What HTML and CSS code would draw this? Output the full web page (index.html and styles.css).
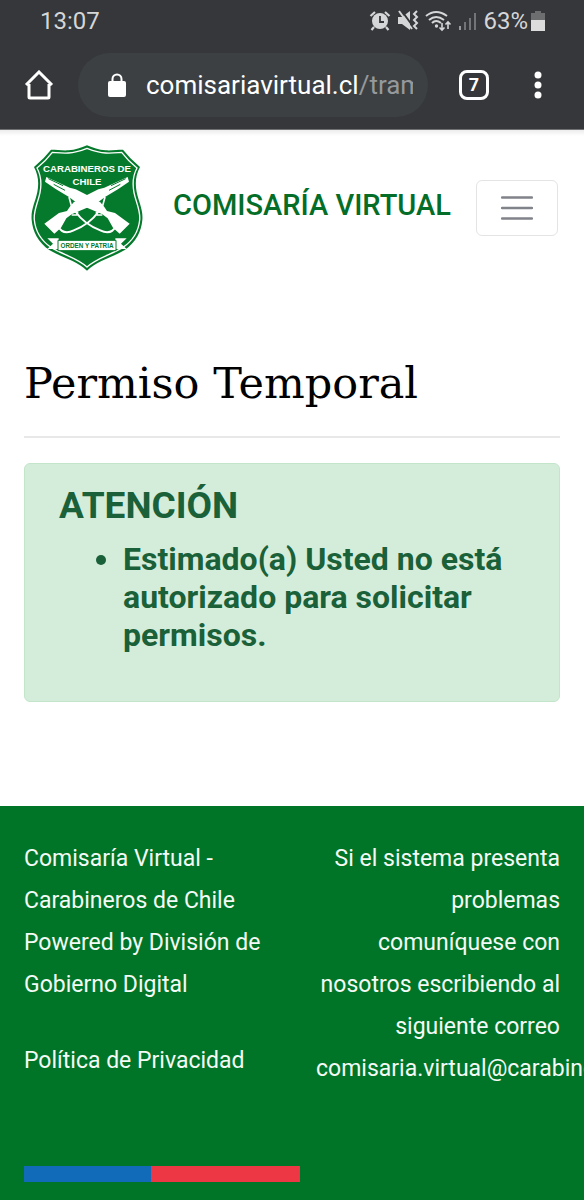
FILE: index.html
```html
<!DOCTYPE html>
<html lang="es">
<head>
  <meta charset="UTF-8">
  <meta name="viewport" content="width=device-width, initial-scale=1">
  <title>Comisaría Virtual</title>
  <link rel="stylesheet" href="styles.css">
</head>
<body>
  <div class="browser">
    <div class="status">
      <span class="clock">13:07</span>
      <div class="status-icons">
        <!-- alarm -->
        <svg width="22" height="22" viewBox="0 0 22 22">
          <circle cx="11" cy="11" r="8" fill="#d5d6d7"/>
          <path d="M1.500 6L6 2M20.500 6L16 2M5 17l-2.500 3M17 17l2.500 3" stroke="#d5d6d7" stroke-width="2.200"/>
          <path d="M11 6v6h4" fill="none" stroke="#36373a" stroke-width="1.800"/>
        </svg>
        <!-- sound off, vibrate -->
        <svg width="22" height="22" viewBox="0 0 22 22">
          <path d="M1 7h4l8-6v19l-8-6H1z" fill="#d5d6d7"/>
          <path d="M4 0l11 15" stroke="#36373a" stroke-width="2"/>
          <path d="M2 1l13 18" stroke="#d5d6d7" stroke-width="2"/>
          <path d="M20 1l-3 3 3 3-3 3 3 3-3 3 3 3" fill="none" stroke="#d5d6d7" stroke-width="2"/>
        </svg>
        <!-- wifi -->
        <svg width="27" height="22" viewBox="0 0 27 22">
          <path d="M1 6Q11-2 22 6M4 10q7-6 15 0M7 13q4-4 9 0" fill="none" stroke="#d5d6d7" stroke-width="2"/>
          <circle cx="11.500" cy="16" r="1.700" fill="#d5d6d7"/>
          <path d="M17 13v7m-2.500-2.500L17 20l2.500-2.500M23 19v-7m-2.500 2.500L23 12l2.500 2.500" fill="none" stroke="#d5d6d7" stroke-width="1.600"/>
        </svg>
        <!-- signal -->
        <svg width="20" height="22" viewBox="0 0 20 22">
          <path d="M2 16v4" stroke="#98999b" stroke-width="2"/>
          <path d="M7 12v8M12 8v12M17 3v17" stroke="#737477" stroke-width="2"/>
        </svg>
      </div>
      <span class="percent">63%</span>
      <svg class="battery" width="14" height="20" viewBox="0 0 14 20">
        <path d="M4 0h6v2h4v7H0V2h4z" fill="#6d6e70"/>
        <path d="M0 9h14v11H0z" fill="#dcdcdc"/>
      </svg>
    </div>
    <div class="toolbar">
      <button class="icon-btn" type="button" aria-label="Inicio">
        <svg width="30" height="30" viewBox="0 0 30 30">
          <path d="M2 15L15 2l13 13M5 14v13q0 1 1 1h18q1 0 1-1V14" fill="none" stroke="#fff" stroke-width="3"/>
        </svg>
      </button>
      <div class="address">
        <svg width="18" height="24" viewBox="0 0 18 24">
          <rect y="8" width="18" height="16" rx="2" fill="#fff"/>
          <path d="M4.500 9V6a4.500 4.500 0 0 1 9 0v3" fill="none" stroke="#fff" stroke-width="2"/>
        </svg>
        <div class="url">comisariavirtual.cl<span>/tramites</span></div>
      </div>
      <button class="tabs" type="button" aria-label="Pestañas">7</button>
      <button class="icon-btn more" type="button" aria-label="Más">
        <svg width="8" height="28" viewBox="0 0 8 28" fill="#fff">
          <circle cx="4" cy="4" r="3.500"/>
          <circle cx="4" cy="14" r="3.500"/>
          <circle cx="4" cy="24" r="3.500"/>
        </svg>
      </button>
    </div>
  </div>

  <header class="navbar">
    <a class="logo" href="#" aria-label="Carabineros de Chile">
      <svg width="114" height="128" viewBox="29 25 342 384">
        <path d="M200 29C218 36 235 43 256 44C276 45 292 42 308 42Q328 68 359 94C346 118 344 143 349 169C355 199 369 222 366 253C363 288 347 320 312 344C275 366 232 374 200 405C168 374 125 366 88 344C53 320 37 288 34 253C31 222 45 199 51 169C56 143 54 118 41 94Q72 68 92 42C108 42 124 45 144 44C165 43 182 36 200 29Z" fill="#067a2c"/>
        <path d="M200 38C218 45 235 51 256 52C276 53 290 51 304 50Q322 74 350 97C338 119 336 145 341 171C347 201 361 224 358 253C355 284 339 314 307 336C270 358 230 367 200 394C170 367 130 358 93 336C61 314 45 284 42 253C39 224 53 201 59 171C64 145 62 119 50 97Q78 74 96 50C110 51 124 53 144 52C165 51 182 45 200 38Z" fill="none" stroke="#fff" stroke-width="4"/>
        <text class="crest-name" x="200" y="109">CARABINEROS DE</text>
        <text class="crest-name" x="200" y="148">CHILE</text>
        <!-- crossed rifles -->
        <g>
          <path d="M78 124L148 156L166 161L200 178L240 200L252 214L260 226L284 232L328 264L298 294L278 276L262 248L246 236L200 216L170 202L146 184L106 160L74 138Z" fill="#fff"/>
          <path d="M84 129L128 150M100 146L134 164" stroke="#067a2c" stroke-width="3"/>
          <path d="M146 184L153 210L174 202M228 228L230 238L246 238" fill="none" stroke="#fff" stroke-width="5"/>
          <path d="M112 270Q128 300 160 284Q208 266 236 226" fill="none" stroke="#fff" stroke-width="6"/>
        </g>
        <g transform="translate(400 0) scale(-1 1)">
          <path d="M78 124L148 156L166 161L200 178L240 200L252 214L260 226L284 232L328 264L298 294L278 276L262 248L246 236L200 216L170 202L146 184L106 160L74 138Z" fill="#fff"/>
          <path d="M84 129L128 150M100 146L134 164" stroke="#067a2c" stroke-width="3"/>
          <path d="M146 184L153 210L174 202M228 228L230 238L246 238" fill="none" stroke="#fff" stroke-width="5"/>
          <path d="M112 270Q128 300 160 284Q208 266 236 226" fill="none" stroke="#fff" stroke-width="6"/>
        </g>
        <path d="M81 308h34v32H81l17-16zM319 308h-34v32h34l-17-16z" fill="#fff"/>
        <path d="M113 314h174v31H113z" fill="#fff" stroke="#067a2c" stroke-width="3"/>
        <text class="crest-motto" x="200" y="337">ORDEN Y PATRIA</text>
      </svg>
    </a>
    <a class="brand" href="#">COMISARÍA VIRTUAL</a>
    <button class="toggler" type="button" aria-label="Menú">
      <svg width="32" height="26" viewBox="0 0 32 26">
        <path d="M1 2.500h30M1 13h30M1 23.500h30" stroke="#808389" stroke-width="2.500" stroke-linecap="round"/>
      </svg>
    </button>
  </header>

  <main>
    <h1>Permiso Temporal</h1>
    <hr>
    <div class="alert">
      <h2>ATENCIÓN</h2>
      <ul>
        <li>Estimado(a) Usted no está autorizado para solicitar permisos.</li>
      </ul>
    </div>
  </main>

  <footer>
    <div class="row">
      <div class="col">
        <p>Comisaría Virtual - Carabineros de Chile<br>Powered by División de Gobierno Digital</p>
        <p><a href="#">Política de Privacidad</a></p>
      </div>
      <div class="col right">
        <p>Si el sistema presenta problemas comuníquese con nosotros escribiendo al siguiente correo <a href="#">comisaria.virtual@carabineros.cl</a></p>
      </div>
    </div>
    <div class="flag"></div>
  </footer>
</body>
</html>
```

FILE: styles.css
```css
* {
  box-sizing: border-box;
}
body {
  margin: 0;
  font-family: Roboto, sans-serif;
  background: #fff;
  overflow-x: hidden;
}
a {
  color: inherit;
  text-decoration: none;
}
button {
  font-family: inherit;
  background: none;
  cursor: pointer;
}
svg {
  display: block;
  flex: none;
}

/* phone bars */
.browser {
  background: #36373a;
  border-bottom: 1px solid #6f7073;
}
.status {
  display: flex;
  align-items: center;
  height: 42px;
  padding: 0 39px 0 40px;
  color: #d5d6d7;
  font-size: 24px;
}
.status-icons {
  display: flex;
  gap: 6px;
  margin-left: auto;
}
.percent {
  margin: 0 3px 0 5px;
}
.toolbar {
  display: flex;
  align-items: center;
  height: 87px;
  padding: 0 42px 2px 24px;
}
.icon-btn {
  padding: 0;
  border: none;
}
.address {
  flex: 1;
  min-width: 0;
  display: flex;
  align-items: center;
  gap: 20px;
  height: 64px;
  margin: 0 31px 0 24px;
  padding: 0 15px 0 30px;
  border-radius: 32px;
  background: #3c4043;
}
.url {
  flex: 1;
  overflow: hidden;
  white-space: nowrap;
  color: #fff;
  font-size: 26px;
  line-height: 32px;
}
.url span {
  color: #96999b;
}
.tabs {
  width: 30px;
  height: 30px;
  padding: 0;
  border: 3px solid #fff;
  border-radius: 8px;
  color: #fff;
  font-size: 18px;
  font-weight: bold;
  line-height: 24px;
}
.more {
  margin-left: 45px;
}

/* site header */
.navbar {
  display: flex;
  align-items: center;
  padding: 14px 26px 14px 30px;
  background: linear-gradient(#ececec, #fff 6px);
}
.crest-name {
  fill: #fff;
  font-family: "Liberation Sans Narrow", "Liberation Sans", sans-serif;
  font-size: 29px;
  font-weight: bold;
  text-anchor: middle;
}
.crest-motto {
  fill: #067a2c;
  font-family: "Liberation Sans", sans-serif;
  font-size: 19px;
  font-weight: bold;
  text-anchor: middle;
}
.brand {
  margin-left: 29px;
  margin-bottom: 6px;
  color: #046e28;
  font-size: 29px;
  font-weight: 500;
  white-space: nowrap;
}
.toggler {
  display: flex;
  align-items: center;
  justify-content: center;
  width: 82px;
  height: 56px;
  margin-left: auto;
  padding: 0;
  border: 1px solid #e3e4e6;
  border-radius: 6px;
}

main {
  padding: 68px 24px 104px;
}
h1 {
  margin: 0 0 24px;
  color: #000;
  font-family: "Roboto Slab", "DejaVu Serif", serif;
  font-size: 43px;
  font-weight: 400;
  line-height: 58px;
}
hr {
  margin: 0 0 25px;
  border: none;
  border-top: 2px solid #e8e8e8;
}
.alert {
  padding: 19px 34px 47px;
  border: 1px solid #c3e6cb;
  border-radius: 6px;
  background: #d4edda;
  color: #1a6038;
}
h2 {
  margin: 0 0 11px;
  font-size: 37px;
  font-weight: bold;
  line-height: 46px;
}
ul {
  margin: 0;
  padding-left: 64px;
  font-size: 32px;
  font-weight: bold;
  line-height: 38px;
}

footer {
  padding-bottom: 18px;
  background: #007528;
  color: #f4faf5;
}
.row {
  display: flex;
  padding-top: 32px;
}
.col {
  width: 50%;
  padding: 0 24px;
  font-size: 23px;
  line-height: 42px;
}
.col p {
  margin: 0 0 34px;
}
.col.right {
  text-align: right;
}
.flag {
  width: 276px;
  height: 16px;
  margin: 42px 0 0 24px;
  background: linear-gradient(90deg, #116bb8 46%, #ee3745 46%);
}
```
